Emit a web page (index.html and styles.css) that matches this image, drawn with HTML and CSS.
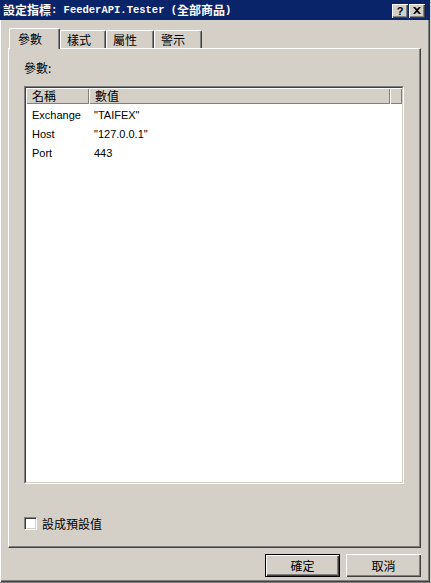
FILE: index.html
```html
<!DOCTYPE html>
<html lang="zh-Hant">
<head>
<meta charset="utf-8">
<title>設定指標</title>
<link rel="stylesheet" href="styles.css">
</head>
<body>
<div class="window">
  <div class="titlebar">
    <div class="title"><span class="cjk">設定指標</span><span class="mono">: FeederAPI.Tester (</span><span class="cjk">全部商品</span><span class="mono">)</span></div>
    <div class="tbtns">
      <div class="tbtn help">?</div>
      <div class="tbtn close">
        <svg width="8" height="7" viewBox="0 0 8 7"><path d="M0 0h2l2 2 2-2h2L5 3.5 8 7H6L4 5 2 7H0l3-3.5z" fill="#000"/></svg>
      </div>
    </div>
  </div>
  <div class="content">
    <div class="tabs">
      <div class="tab sel t1">參數</div>
      <div class="tab t2">樣式</div>
      <div class="tab t3">屬性</div>
      <div class="tab t4">警示</div>
    </div>
    <div class="panel">
      <div class="label">參數:</div>
      <div class="list">
        <div class="list-inner">
          <div class="header">
            <div class="hcell c1">名稱</div>
            <div class="hcell c2">數值</div>
            <div class="hcell c3"></div>
          </div>
          <div class="row"><div class="cell c1">Exchange</div><div class="cell c2">"TAIFEX"</div></div>
          <div class="row"><div class="cell c1">Host</div><div class="cell c2">"127.0.0.1"</div></div>
          <div class="row"><div class="cell c1">Port</div><div class="cell c2">443</div></div>
        </div>
      </div>
      <div class="check-row">
        <div class="checkbox"></div>
        <div class="check-label">設成預設值</div>
      </div>
    </div>
    <div class="buttons">
      <div class="btn default"><div class="btn-face">確定</div></div>
      <div class="btn"><div class="btn-face">取消</div></div>
    </div>
  </div>
</div>
</body>
</html>
```
FILE: styles.css
```css
html, body {
  margin: 0;
  padding: 0;
  background: #d4d0c8;
}
.window {
  width: 431px;
  height: 583px;
  box-sizing: border-box;
  background: #d4d0c8;
  border-right: 1px solid #d4d0c8;
  border-bottom: 1px solid #808080;
  box-shadow: inset 1px 0 #ffffff, inset -1px -1px #404040, inset -2px -2px #808080;
  display: flex;
  flex-direction: column;
  font-family: "Liberation Sans", "Noto Sans CJK TC", sans-serif;
  font-size: 12px;
  color: #000;
}
.titlebar {
  height: 20px;
  background: #0a246a;
  color: #fff;
  display: flex;
  align-items: center;
  justify-content: space-between;
  padding: 0 5px 0 3px;
  flex: none;
}
.title {
  font-weight: bold;
  white-space: nowrap;
  display: flex;
  align-items: center;
}
.title .cjk {
  font-family: "Noto Sans CJK TC", sans-serif;
  font-size: 12px;
  line-height: 14px;
}
.title .mono {
  font-family: "Liberation Mono", monospace;
  font-size: 10.5px;
  line-height: 14px;
  white-space: pre;
}
.tbtns {
  display: flex;
  gap: 1px;
  padding-top: 2px;
}
.tbtn {
  width: 16px;
  height: 14px;
  box-sizing: border-box;
  background: #d4d0c8;
  box-shadow: inset 1px 1px #ffffff, inset -1px -1px #404040, inset -2px -2px #808080;
  color: #000;
  display: flex;
  align-items: center;
  justify-content: center;
}
.help {
  font-family: "Liberation Sans", sans-serif;
  font-weight: bold;
  font-size: 11px;
  line-height: 12px;
  padding-bottom: 1px;
}
.close svg {
  display: block;
  margin-top: -1px;
}
.content {
  flex: 1;
  display: flex;
  flex-direction: column;
  padding: 8px 9px 0 8px;
}
.tabs {
  height: 20px;
  display: flex;
  align-items: flex-end;
  padding-left: 1px;
  flex: none;
}
.tab {
  height: 18px;
  box-sizing: border-box;
  background: #d4d0c8;
  border-top: 1px solid #fff;
  border-left: 1px solid #fff;
  border-right: 1px solid #404040;
  border-radius: 2px 2px 0 0;
  box-shadow: inset -1px 0 #808080;
  font-family: "Noto Sans CJK TC", sans-serif;
  font-size: 12px;
  line-height: 14px;
  padding: 2px 0 0 6px;
  white-space: nowrap;
}
.tab.sel {
  height: 21px;
  margin-bottom: -1px;
  position: relative;
  z-index: 1;
  padding: 3px 0 0 8px;
}
.t1 { width: 51px; }
.t2 { width: 46px; }
.t3 { width: 48px; }
.t4 { width: 48px; }
.panel {
  height: 500px;
  box-sizing: border-box;
  border-top: 1px solid #fff;
  border-left: 1px solid #fff;
  border-right: 1px solid #404040;
  border-bottom: 1px solid #404040;
  box-shadow: inset -1px -1px #808080;
  display: flex;
  flex-direction: column;
  padding: 12px 0 0 15px;
  flex: none;
}
.label {
  font-family: "Noto Sans CJK TC", sans-serif;
  height: 14px;
  line-height: 14px;
}
.list {
  margin-top: 11px;
  width: 380px;
  height: 398px;
  box-sizing: border-box;
  border-style: solid;
  border-width: 1px;
  border-color: #808080 #fff #fff #808080;
}
.list-inner {
  height: 100%;
  box-sizing: border-box;
  border-style: solid;
  border-width: 1px;
  border-color: #404040 #d4d0c8 #d4d0c8 #404040;
  background: #fff;
}
.header {
  display: flex;
  height: 16px;
  background: #d4d0c8;
}
.hcell {
  box-sizing: border-box;
  height: 16px;
  box-shadow: inset 1px 1px #fff, inset -1px -1px #808080;
  font-family: "Noto Sans CJK TC", sans-serif;
  font-size: 12px;
  line-height: 15px;
  padding-left: 6px;
}
.header .c1 { width: 63px; }
.header .c2 { width: 301px; }
.header .c3 { flex: 1; }
.row {
  display: flex;
  height: 19px;
  align-items: center;
  font-size: 11px;
}
.header + .row { margin-top: 1px; }
.cell.c1 { width: 63px; padding-left: 6px; box-sizing: border-box; }
.cell.c2 { padding-left: 5px; }
.check-row {
  margin-top: 33px;
  display: flex;
  align-items: center;
  height: 13px;
}
.checkbox {
  width: 13px;
  height: 13px;
  box-sizing: border-box;
  border-style: solid;
  border-width: 1px;
  border-color: #808080 #fff #fff #808080;
  background: #fff;
  box-shadow: inset 1px 1px #404040, inset -1px -1px #d4d0c8;
}
.check-label {
  margin-left: 5px;
  font-family: "Noto Sans CJK TC", sans-serif;
  font-size: 12px;
  line-height: 14px;
}
.buttons {
  display: flex;
  justify-content: flex-end;
  gap: 6px;
  margin-top: 6px;
}
.btn {
  width: 75px;
  height: 23px;
  box-sizing: border-box;
  display: flex;
}
.btn.default {
  border: 1px solid #000;
}
.btn-face {
  flex: 1;
  box-shadow: inset 1px 1px #fff, inset -1px -1px #404040, inset -2px -2px #808080;
  display: flex;
  align-items: center;
  justify-content: center;
  font-family: "Noto Sans CJK TC", sans-serif;
  font-size: 12px;
  line-height: 14px;
}
```
